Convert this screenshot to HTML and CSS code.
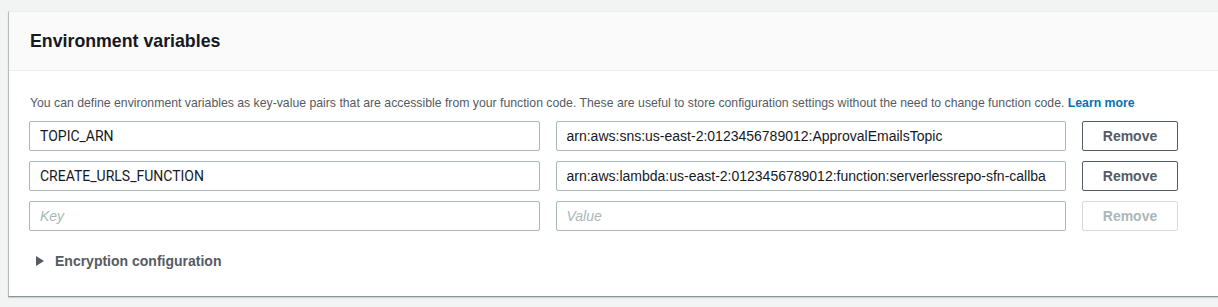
FILE: index.html
```html
<!DOCTYPE html>
<html>
<head>
<meta charset="utf-8">
<link rel="stylesheet" href="styles.css">
</head>
<body>
<section class="card">
  <header class="card-header">
    <h2 class="title">Environment variables</h2>
  </header>
  <div class="card-body">
    <p class="desc">You can define environment variables as key-value pairs that are accessible from your function code. These are useful to store configuration settings without the need to change function code. <a class="link" href="#">Learn more</a></p>
    <div class="rows">
      <div class="field key">TOPIC_ARN</div>
      <div class="field">arn:aws:sns:us-east-2:0123456789012:ApprovalEmailsTopic</div>
      <button class="btn">Remove</button>

      <div class="field key">CREATE_URLS_FUNCTION</div>
      <div class="field">arn:aws:lambda:us-east-2:0123456789012:function:serverlessrepo-sfn-callba</div>
      <button class="btn">Remove</button>

      <div class="field placeholder">Key</div>
      <div class="field placeholder">Value</div>
      <button class="btn disabled">Remove</button>
    </div>
    <div class="expander">
      <span class="caret"></span>
      <span class="exp-label">Encryption configuration</span>
    </div>
  </div>
</section>
</body>
</html>
```

FILE: styles.css
```css
html, body {
  margin: 0;
  padding: 0;
}
body {
  background: #f2f3f3;
  padding: 11px 0 0 8px;
  height: 307px;
  box-sizing: border-box;
  overflow: hidden;
  font-family: "Liberation Sans", Arial, sans-serif;
  color: #16191f;
}
.card {
  width: 1240px;
  background: #fff;
  border-top: 1px solid #eaeded;
  border-left: 1px solid #b4bcbd;
  border-bottom: 1px solid #879596;
  box-shadow: 0 1px 1px 0 rgba(0, 28, 36, 0.15);
}
.card-header {
  background: #fafafa;
  border-bottom: 1px solid #eaeded;
  height: 58px;
  display: flex;
  align-items: center;
  padding-left: 21px;
}
.title {
  margin: 0;
  padding-top: 1px;
  font-size: 17.75px;
  font-weight: 700;
  color: #16191f;
}
.card-body {
  padding: 24px 0 25px 20px;
}
.desc {
  margin: 0 0 10px 1px;
  font-size: 12.25px;
  line-height: 16px;
  color: #545b64;
}
.link {
  color: #0073bb;
  font-weight: 700;
  text-decoration: none;
}
.rows {
  width: 1149px;
  display: grid;
  grid-template-columns: 1fr 1fr 96px;
  column-gap: 16px;
  row-gap: 10px;
}
.field {
  height: 30px;
  box-sizing: border-box;
  border: 1px solid #aab7b8;
  border-radius: 2px;
  padding: 0 10px;
  font-size: 14px;
  line-height: 28px;
  color: #16191f;
  white-space: nowrap;
  overflow: hidden;
}
.field.key {
  font-family: Roboto, "Liberation Sans", sans-serif;
}
.placeholder {
  color: #aab7b8;
  font-style: italic;
}
.btn {
  height: 30px;
  box-sizing: border-box;
  border: 1px solid #545b64;
  border-radius: 2px;
  background: #fff;
  font-family: inherit;
  font-size: 14px;
  font-weight: 700;
  color: #545b64;
  padding: 0;
}
.btn.disabled {
  border-color: #d5dbdb;
  color: #aab7b8;
}
.expander {
  margin-top: 20px;
  display: flex;
  align-items: center;
  height: 20px;
  padding-left: 7px;
}
.caret {
  width: 0;
  height: 0;
  border-top: 5px solid transparent;
  border-bottom: 5px solid transparent;
  border-left: 8px solid #545b64;
  margin-right: 11px;
}
.exp-label {
  font-size: 14px;
  font-weight: 700;
  color: #545b64;
}
```
